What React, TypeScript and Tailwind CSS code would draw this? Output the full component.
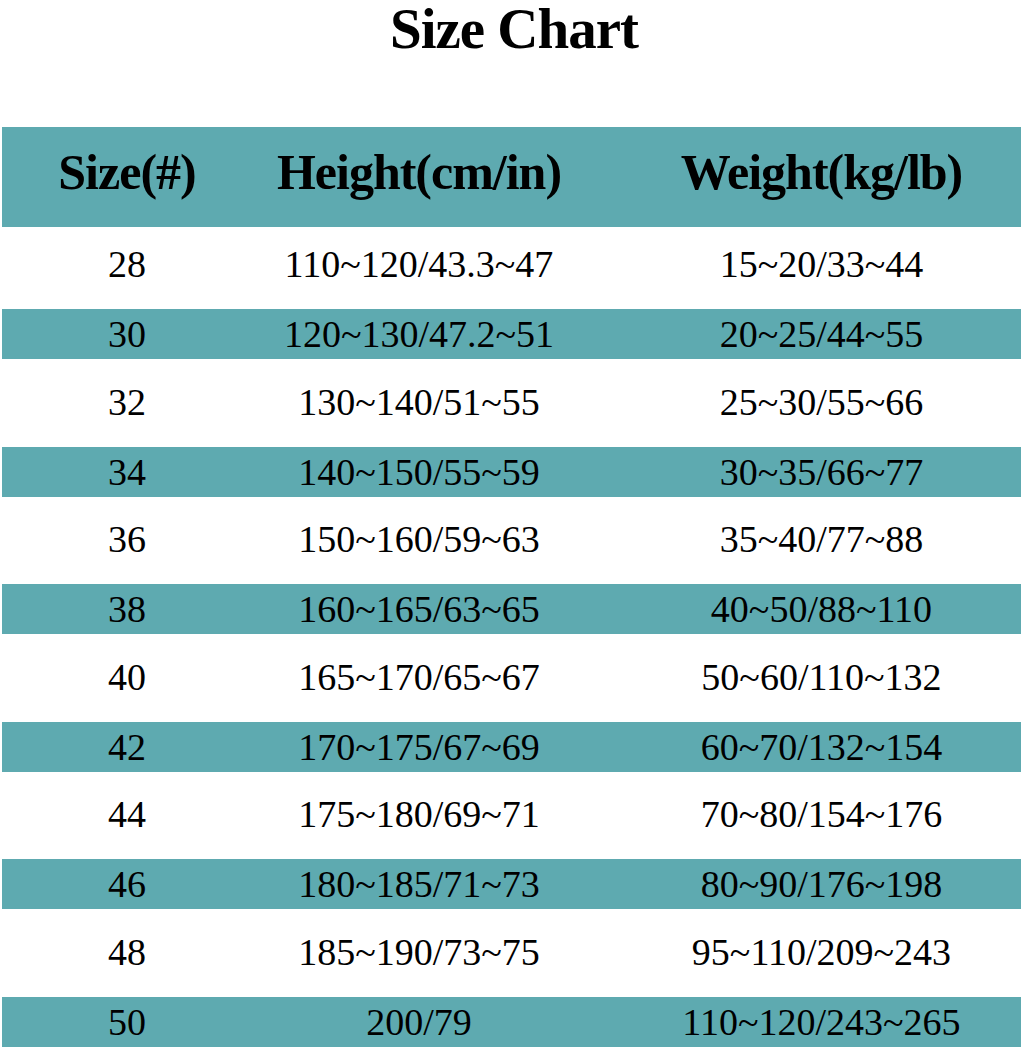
const rows = [
  { size: "28", height: "110~120/43.3~47", weight: "15~20/33~44" },
  { size: "30", height: "120~130/47.2~51", weight: "20~25/44~55" },
  { size: "32", height: "130~140/51~55", weight: "25~30/55~66" },
  { size: "34", height: "140~150/55~59", weight: "30~35/66~77" },
  { size: "36", height: "150~160/59~63", weight: "35~40/77~88" },
  { size: "38", height: "160~165/63~65", weight: "40~50/88~110" },
  { size: "40", height: "165~170/65~67", weight: "50~60/110~132" },
  { size: "42", height: "170~175/67~69", weight: "60~70/132~154" },
  { size: "44", height: "175~180/69~71", weight: "70~80/154~176" },
  { size: "46", height: "180~185/71~73", weight: "80~90/176~198" },
  { size: "48", height: "185~190/73~75", weight: "95~110/209~243" },
  { size: "50", height: "200/79", weight: "110~120/243~265" },
];

export default function App() {
  return (
    <div className="h-[1049px] w-[1024px] overflow-hidden bg-white font-['Liberation_Serif',serif] text-black">
      <h1 className="pl-[4px] text-center text-[57px] leading-[57px] font-bold tracking-[-1px]">
        Size Chart
      </h1>

      <div className="mt-[70px] ml-[2px] w-[1019px]">
        <div className="grid h-[100px] grid-cols-[250px_334px_1fr] items-center bg-[#5eaab0] pb-[10px] text-[50px] leading-none font-bold tracking-[-1px]">
          <div className="text-center">Size(#)</div>
          <div className="text-center">Height(cm/in)</div>
          <div className="pl-[36px] text-center">Weight(kg/lb)</div>
        </div>

        {rows.map((row, i) => {
          const teal = i % 2 === 1;
          return (
            <div
              key={row.size}
              className={`grid grid-cols-[250px_334px_1fr] items-center text-[38px] leading-none ${
                teal
                  ? "h-[50px] bg-[#5eaab0]"
                  : i === 0
                    ? "h-[82px] pb-[8px]"
                    : "h-[87.5px] pb-[2px]"
              }`}
            >
              <div className="text-center">{row.size}</div>
              <div className="text-center">{row.height}</div>
              <div className="pl-[36px] text-center">{row.weight}</div>
            </div>
          );
        })}
      </div>
    </div>
  );
}
